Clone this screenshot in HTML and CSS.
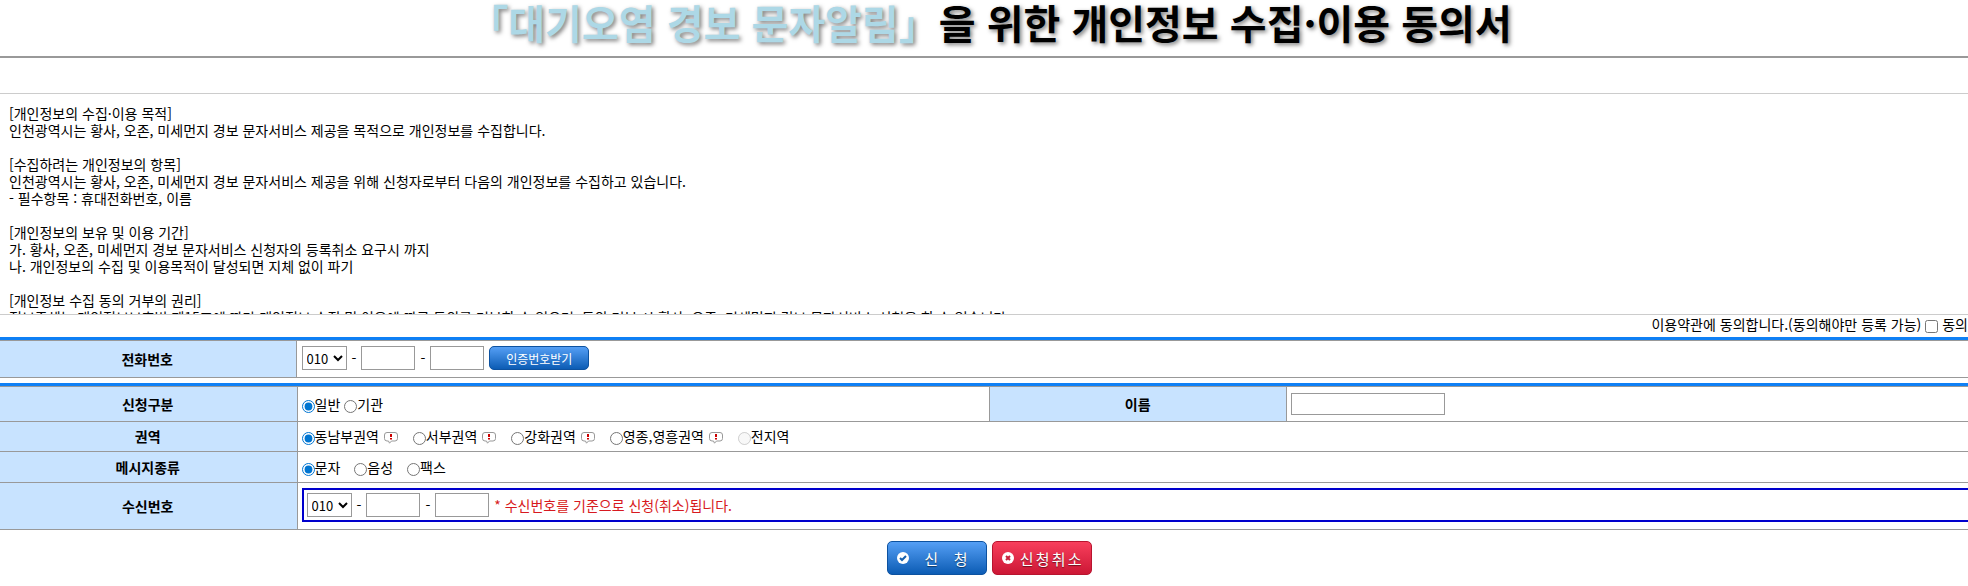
FILE: index.html
```html
<!DOCTYPE html>
<html lang="ko">
<head>
    <meta charset="UTF-8">
    <meta name="viewport" content="width=device-width, initial-scale=1.0">
    <title>대기오염 경보 문자알림</title>
    <link rel="stylesheet" href="styles.css">
</head>
<body>

<svg class="sprite" aria-hidden="true">
    <symbol id="notice" viewBox="0 0 14 12">
        <path d="M3 .5h8a2.500 2.500 0 0 1 2.500 2.500v3.500a2.500 2.500 0 0 1-2.500 2.500H7.500L5.500 11.200 4.500 9H3A2.500 2.500 0 0 1 .5 6.500V3A2.500 2.500 0 0 1 3 .5z" fill="#fff" stroke="#999"/>
        <path d="M6 2h2v3H6zM6 6h2v1.500H6z" fill="#c00"/>
    </symbol>
</svg>

<h1 class="title"><span>「대기오염 경보 문자알림」</span>을 위한 개인정보 수집·이용 동의서</h1>

<div class="terms">[개인정보의 수집·이용 목적]
인천광역시는 황사, 오존, 미세먼지 경보 문자서비스 제공을 목적으로 개인정보를 수집합니다.

[수집하려는 개인정보의 항목]
인천광역시는 황사, 오존, 미세먼지 경보 문자서비스 제공을 위해 신청자로부터 다음의 개인정보를 수집하고 있습니다.
- 필수항목 : 휴대전화번호, 이름

[개인정보의 보유 및 이용 기간]
가. 황사, 오존, 미세먼지 경보 문자서비스 신청자의 등록취소 요구시 까지
나. 개인정보의 수집 및 이용목적이 달성되면 지체 없이 파기

[개인정보 수집 동의 거부의 권리]
정보주체는 개인정보보호법 제15조에 따라 개인정보 수집 및 이용에 따른 동의를 거부할 수 있으며, 동의 거부 시 황사, 오존, 미세먼지 경보 문자서비스 신청을 할 수 없습니다.</div>

<form>
    <div class="agree">
        이용약관에 동의합니다.(동의해야만 등록 가능)
        <label><input type="checkbox" name="agree"> 동의</label>
    </div>

    <div class="section">
        <table class="form-table">
            <tr class="row-phone">
                <th>전화번호</th>
                <td class="phone-cell">
                    <div class="phone">
                        <select name="tel1" aria-label="전화번호 앞자리"><option>010</option></select>
                        <span>-</span>
                        <input type="text" name="tel2" aria-label="전화번호 가운데자리">
                        <span>-</span>
                        <input type="text" name="tel3" aria-label="전화번호 뒷자리">
                        <button type="button" class="btn-auth">인증번호받기</button>
                    </div>
                </td>
            </tr>
        </table>
    </div>

    <div class="section">
        <table class="form-table">
            <colgroup>
                <col class="col-label">
                <col class="col-type">
                <col class="col-label">
                <col>
            </colgroup>
            <tr class="row-type">
                <th>신청구분</th>
                <td>
                    <div class="options tight">
                        <label><input type="radio" name="type" checked>일반</label>
                        <label><input type="radio" name="type">기관</label>
                    </div>
                </td>
                <th><label for="name">이름</label></th>
                <td><input type="text" id="name" class="name"></td>
            </tr>
            <tr class="row-area">
                <th>권역</th>
                <td colspan="3">
                    <div class="options">
                        <label><input type="radio" name="area" checked>동남부권역 <svg class="notice"><use href="#notice"/></svg></label>
                        <label><input type="radio" name="area">서부권역 <svg class="notice"><use href="#notice"/></svg></label>
                        <label><input type="radio" name="area">강화권역 <svg class="notice"><use href="#notice"/></svg></label>
                        <label><input type="radio" name="area">영종,영흥권역 <svg class="notice"><use href="#notice"/></svg></label>
                        <label><input type="radio" name="area" disabled>전지역</label>
                    </div>
                </td>
            </tr>
            <tr class="row-message">
                <th>메시지종류</th>
                <td colspan="3">
                    <div class="options">
                        <label><input type="radio" name="msg" checked>문자</label>
                        <label><input type="radio" name="msg">음성</label>
                        <label><input type="radio" name="msg">팩스</label>
                    </div>
                </td>
            </tr>
            <tr class="row-receive">
                <th>수신번호</th>
                <td colspan="3" class="phone-cell">
                    <div class="phone receive">
                        <select name="hp1" aria-label="수신번호 앞자리"><option>010</option></select>
                        <span>-</span>
                        <input type="text" name="hp2" aria-label="수신번호 가운데자리">
                        <span>-</span>
                        <input type="text" name="hp3" aria-label="수신번호 뒷자리">
                        <em>* 수신번호를 기준으로 신청(취소)됩니다.</em>
                    </div>
                </td>
            </tr>
        </table>
    </div>

    <div class="buttons">
        <button type="button" class="btn btn-apply">
            <svg viewBox="0 0 12 12"><circle cx="6" cy="6" r="6" fill="#fff"/><path d="M3 6l2 2 4-4" fill="none" stroke="#1560ae" stroke-width="2"/></svg>
            <span>신</span><span>청</span>
        </button>
        <button type="button" class="btn btn-cancel">
            <svg viewBox="0 0 12 12"><circle cx="6" cy="6" r="6" fill="#fff"/><path d="M4 4l4 4M8 4l-4 4" stroke="#c8203c" stroke-width="2"/></svg>
            <span>신</span><span>청</span><span>취</span><span>소</span>
        </button>
    </div>
</form>

</body>
</html>
```
FILE: styles.css
```css
* {
    box-sizing: border-box;
}

body {
    margin: 0;
    font-family: "Noto Sans CJK KR", sans-serif;
    font-size: 14px;
    line-height: 17px;
    color: #000;
    background-color: #fff;
}

.sprite {
    display: none;
}

.title {
    margin: 0;
    height: 58px;
    padding-left: 12px;
    border-bottom: 2px solid #999;
    font-size: 40px;
    line-height: 45px;
    text-align: center;
    text-shadow: 2px 2px 4px rgba(0, 0, 0, 0.5);
}

.title span {
    color: lightblue;
}

.terms {
    height: 222px;
    margin-top: 35px;
    padding: 11px 9px;
    border-top: 1px solid #ccc;
    border-bottom: 1px solid #ccc;
    white-space: pre-wrap;
    overflow: hidden;
}

.agree {
    display: flex;
    justify-content: flex-end;
    gap: 4px;
    height: 22px;
    line-height: 18px;
}

input,
select,
button {
    font-family: inherit;
    font-size: 13px;
}

input[type="radio"],
input[type="checkbox"] {
    width: 13px;
    height: 13px;
    margin: 0;
    vertical-align: -3px;
    accent-color: #0075d1;
}

.section {
    margin-bottom: 5px;
    border-top: 3px solid #0f80f5;
}

.form-table {
    width: 100%;
    border-collapse: collapse;
    table-layout: fixed;
}

.form-table th,
.form-table td {
    border: 1px solid #999;
    padding: 0 5px 0 4px;
}

.form-table th {
    width: 296px;
    background-color: #c8e3ff;
}

.form-table th:first-child {
    border-left: 0;
}

.form-table td:last-child {
    border-right: 0;
}

.col-label {
    width: 297px;
}

/* a little over a third of the row */
.col-type {
    width: 35.2%;
}

.row-phone {
    height: 37px;
}

.row-type {
    height: 35px;
}

.row-area {
    height: 30px;
}

.row-message {
    height: 31px;
}

.row-receive {
    height: 47px;
}

.form-table .phone-cell {
    padding: 5px 0 0 5px;
    vertical-align: top;
}

.row-receive .phone-cell {
    padding-left: 4px;
}

.phone {
    display: flex;
    align-items: center;
    gap: 5px;
}

.phone select {
    width: 45px;
    height: 24px;
    padding: 0;
    border: 1px solid #999;
    background-color: #fff;
}

.phone input {
    width: 54px;
    height: 24px;
    border: 1px solid #999;
}

.name {
    width: 154px;
    height: 22px;
    border: 1px solid #999;
}

.btn-auth {
    width: 100px;
    height: 24px;
    padding: 0;
    border: 1px solid #0d52a0;
    border-radius: 5px;
    background: linear-gradient(#559ff5, #0c5cb4);
    color: #fff;
    font-size: 12px;
}

.options {
    display: flex;
    gap: 14px;
}

.options.tight {
    gap: 4px;
}

.notice {
    width: 14px;
    height: 12px;
    margin: 0 1px;
    vertical-align: -2px;
}

.receive {
    height: 34px;
    padding: 0 3px;
    border: 2px solid #0000cd;
    border-right: 0;
}

.receive em {
    font-style: normal;
    color: #d71920;
}

.buttons {
    display: flex;
    justify-content: center;
    gap: 5px;
    padding: 6px 0 0 10px;
}

.btn {
    display: flex;
    align-items: center;
    justify-content: space-between;
    width: 100px;
    height: 34px;
    padding: 0 9px;
    border-radius: 5px;
    color: #fff;
    font-size: 15px;
    text-shadow: 0 1px 1px rgba(0, 0, 0, 0.5);
}

.btn svg {
    width: 12px;
    height: 12px;
}

.btn-apply {
    padding-right: 18px;
    border: 1px solid #0d52a0;
    background: linear-gradient(#559ff5, #0c5cb4);
}

.btn-cancel {
    border: 1px solid #b8142f;
    background: linear-gradient(#f83f5c, #cc1735);
}

.btn-cancel svg {
    margin-right: 4px;
}
```
